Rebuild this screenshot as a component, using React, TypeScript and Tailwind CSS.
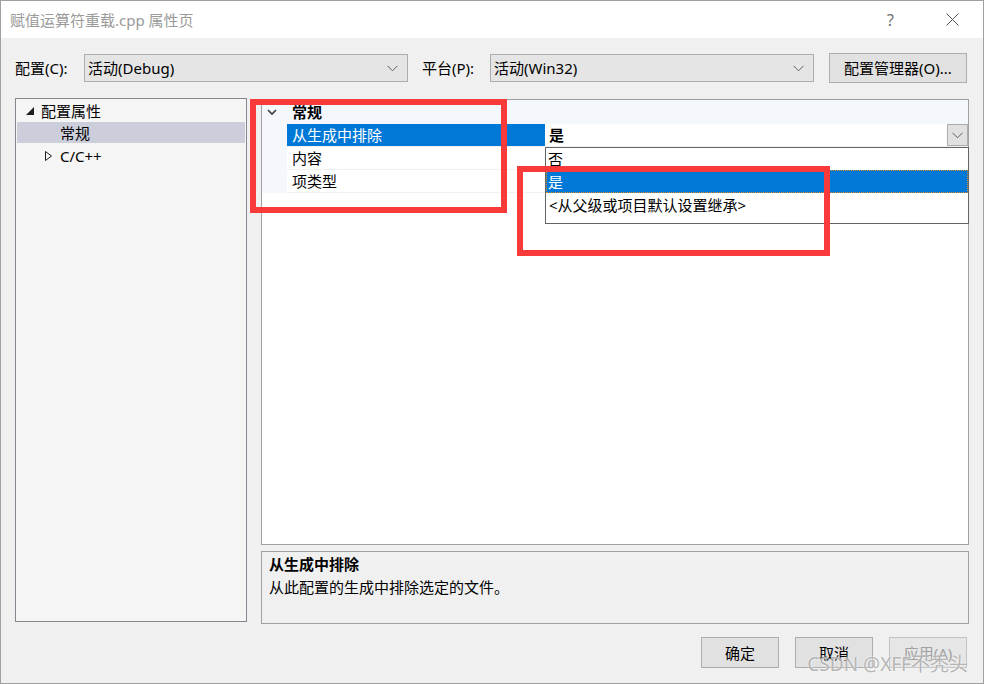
import { Fragment } from "react";

const font = "[font-family:'Noto_Sans','Noto_Sans_CJK_SC',sans-serif]";

function Chevron({ className = "" }: { className?: string }) {
  return (
    <svg width="11" height="7" viewBox="0 0 11 7" className={className}>
      <polyline points="0.5,0.8 5.5,5.8 10.5,0.8" fill="none" stroke="#5f5f5f" strokeWidth="1" />
    </svg>
  );
}

function Select({ value }: { value: string }) {
  return (
    <div className="w-[324px] h-[28px] bg-[#e5e5e5] border border-[#adadad] flex items-center pl-[3px] pr-[9px]">
      <span className="flex-1 leading-[20px]">{value}</span>
      <Chevron />
    </div>
  );
}

function Button({ label, disabled }: { label: string; disabled?: boolean }) {
  return (
    <div
      className={
        "w-[78px] h-[31px] border border-[#adadad] bg-[#e1e1e1] flex items-center justify-center leading-[20px] " +
        (disabled ? "text-[#a0a0a0] bg-[#e6e6e6] border-[#c4c4c4]" : "text-black")
      }
    >
      {label}
    </div>
  );
}

const rows = [
  { name: "从生成中排除", value: "是", selected: true },
  { name: "内容", value: "", selected: false },
  { name: "项类型", value: "", selected: false },
];

export default function App() {
  return (
    <div className={`${font} relative w-[984px] h-[684px] overflow-hidden border border-[#a0a0a0] bg-[#f0f0f0] text-[15px] text-black flex flex-col`}>
      {/* title bar */}
      <div className="h-[37px] bg-white flex items-center pl-[9px] shrink-0">
        <span className="flex-1 text-[#9a9a9a] leading-[20px]">赋值运算符重载.cpp 属性页</span>
        <span className="text-[#707070] text-[16px] leading-[20px] w-[12px] mr-[47px]">?</span>
        <svg width="13" height="13" viewBox="0 0 13 13" className="mr-[24px]">
          <line x1="0.5" y1="0.5" x2="12.5" y2="12.5" stroke="#505050" strokeWidth="1" />
          <line x1="12.5" y1="0.5" x2="0.5" y2="12.5" stroke="#505050" strokeWidth="1" />
        </svg>
      </div>

      <div className="flex-1 px-[14px] flex flex-col">
        {/* config row */}
        <div className="mt-[15px] h-[30px] flex items-center">
          <span className="w-[69px] leading-[20px]">配置(C):</span>
          <Select value="活动(Debug)" />
          <span className="ml-[14px] w-[68px] leading-[20px]">平台(P):</span>
          <Select value="活动(Win32)" />
          <div className="ml-[15px] w-[138px] h-[30px] border border-[#adadad] bg-[#e1e1e1] flex items-center justify-center leading-[20px]">
            配置管理器(O)...
          </div>
        </div>

        {/* main */}
        <div className="mt-[15px] flex gap-[14px]">
          {/* tree */}
          <div className="w-[232px] h-[524px] border border-[#828790] bg-[#f5f5f5] pt-[1px] px-[1px]">
            <div className="h-[22px] flex items-center">
              <svg width="8" height="8" viewBox="0 0 8 8" className="ml-[9px] mr-[7px]">
                <polygon points="0,8 8,8 8,0" fill="#1e1e1e" />
              </svg>
              <span className="leading-[20px]">配置属性</span>
            </div>
            <div className="h-[21px] bg-[#cccedb] flex items-center pl-[43px]">
              <span className="leading-[20px]">常规</span>
            </div>
            <div className="h-[25px] flex items-center">
              <svg width="7" height="10" viewBox="0 0 7 10" className="ml-[28px] mr-[8px]">
                <polygon points="0.5,0.5 6.5,5 0.5,9.5" fill="none" stroke="#1e1e1e" strokeWidth="1" />
              </svg>
              <span className="leading-[20px]">C/C++</span>
            </div>
          </div>

          {/* right column */}
          <div className="flex-1 flex flex-col pt-[1px]">
            <div className="relative h-[446px] border border-[#a0a0a0] bg-white">
              <div className="h-[24px] bg-[#f4f7fc] flex items-center">
                <svg width="10" height="7" viewBox="0 0 10 7" className="ml-[5px] mr-[15px]">
                  <polyline points="1,1 5,5 9,1" fill="none" stroke="#3a3a3a" strokeWidth="1.6" />
                </svg>
                <span className="font-bold leading-[20px]">常规</span>
              </div>
              {rows.map((r) => (
                <Fragment key={r.name}>
                  <div className="h-[23px] flex">
                    <div className="w-[25px] bg-[#f4f7fc]" />
                    <div
                      className={
                        "w-[258px] flex items-center pl-[5px] border-b border-[#f0f0f0] " +
                        (r.selected ? "bg-[#0078d7] text-white border-[#0078d7]" : "bg-white")
                      }
                    >
                      <span className="leading-[20px]">{r.name}</span>
                    </div>
                    <div className="flex-1 flex items-center pl-[4px] border-b border-[#f0f0f0]">
                      <span className="flex-1 font-bold leading-[20px]">{r.value}</span>
                      {r.selected && (
                        <div className="w-[21px] h-[22px] bg-[#e1e1e1] border border-[#adadad] flex items-center justify-center">
                          <Chevron />
                        </div>
                      )}
                    </div>
                  </div>
                </Fragment>
              ))}

              {/* dropdown list */}
              <div className="absolute left-[283px] right-[-1px] top-[47px] border border-[#646464] bg-white pb-[7px]">
                <div className="h-[22px] flex items-center pl-[2px]">
                  <span className="leading-[20px]">否</span>
                </div>
                <div className="h-[23px] flex items-center pl-[2px] bg-[#0078d7] text-white outline outline-1 outline-dotted outline-[#e08a1e] -outline-offset-1">
                  <span className="leading-[20px]">是</span>
                </div>
                <div className="h-[23px] flex items-center pl-[3px]">
                  <span className="leading-[20px]">&lt;从父级或项目默认设置继承&gt;</span>
                </div>
              </div>
            </div>

            <div className="mt-[6px] h-[73px] border border-[#a0a0a0] bg-[#f0f0f0] px-[7px] pt-[1px]">
              <div className="font-bold leading-[23px]">从生成中排除</div>
              <div className="leading-[22px]">从此配置的生成中排除选定的文件。</div>
            </div>
          </div>
        </div>

        {/* buttons */}
        <div className="mt-[13px] mr-[2px] flex justify-end gap-[16px]">
          <Button label="确定" />
          <Button label="取消" />
          <Button label="应用(A)" disabled />
        </div>
      </div>

      {/* annotations */}
      <div className="absolute left-[249px] top-[98px] w-[257px] h-[114px] border-[6px] border-[#f93a3a]" />
      <div className="absolute left-[516px] top-[165px] w-[313px] h-[90px] border-[6px] border-[#f93a3a]" />

      {/* watermark */}
      <div className="absolute right-[15px] top-[650px] text-[19px] leading-[26px] text-[#a4a4a4]/80 [text-shadow:0_0_2px_#ffffff]">
        CSDN @XFF不秃头
      </div>
    </div>
  );
}
